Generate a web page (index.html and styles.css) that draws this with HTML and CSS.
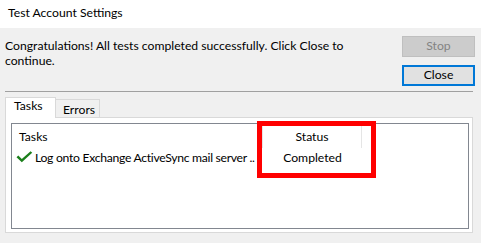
FILE: index.html
```html
<!DOCTYPE html>
<html>
<head>
<meta charset="utf-8">
<link rel="stylesheet" href="styles.css">
</head>
<body>
<div class="window">
  <div class="titlebar">Test Account Settings</div>
  <div class="body">
    <div class="toprow">
      <div class="message">Congratulations! All tests completed successfully. Click Close to continue.</div>
      <div class="buttons">
        <div class="btn btn-disabled">Stop</div>
        <div class="btn btn-default">Close</div>
      </div>
    </div>
    <div class="separator"></div>
    <div class="tabs">
      <div class="tab tab-active">Tasks</div>
      <div class="tab">Errors</div>
    </div>
    <div class="panel">
      <div class="listbox">
        <div class="grid">
          <div class="hcell hcell-task">Tasks</div>
          <div class="hcell hcell-status">Status</div>
          <div class="hcell hcell-rest"></div>
          <div class="cell cell-task">
            <svg class="check" width="17" height="12" viewBox="0 0 17 12"><path d="M0.5 6.2 L2.3 4.6 L5.8 7.9 L14.6 0.3 L16.2 1.8 L5.8 11.2 Z" fill="#1b7f1b"/></svg>
            <span class="task-text">Log onto Exchange ActiveSync mail server ..</span>
          </div>
          <div class="cell cell-status">Completed</div>
          <div class="cell"></div>
        </div>
        <div class="highlight"></div>
      </div>
    </div>
  </div>
</div>
</body>
</html>
```
FILE: styles.css
```css
html, body {
  margin: 0;
  padding: 0;
}
body {
  width: 481px;
  height: 243px;
  overflow: hidden;
  background: #f0f0f0;
  font-family: "Lato", "Noto Sans", "Liberation Sans", sans-serif;
  font-size: 12.2px;
  color: #000;
}
.window {
  display: flex;
  flex-direction: column;
}
.titlebar {
  height: 28px;
  background: #fff;
  line-height: 26px;
  padding-left: 8px;
  box-sizing: border-box;
}
.body {
  padding: 0 8px 0 5px;
  display: flex;
  flex-direction: column;
}
.toprow {
  display: flex;
  justify-content: space-between;
  padding-top: 8px;
}
.message {
  width: 380px;
  line-height: 15px;
  padding-top: 2px;
}
.buttons {
  display: flex;
  flex-direction: column;
  gap: 8px;
  margin-right: -2px;
}
.btn {
  width: 73px;
  height: 21px;
  box-sizing: border-box;
  text-align: center;
  line-height: 18px;
}
.btn-disabled {
  background: #cccccc;
  border: 1px solid #bfbfbf;
  color: #838383;
}
.btn-default {
  background: #e1e1e1;
  border: 2px solid #0078d7;
  line-height: 16px;
}
.separator {
  height: 1px;
  background: #a0a0a0;
  margin-top: 5px;
}
.tabs {
  display: flex;
  align-items: flex-end;
  margin-top: 4px;
  height: 21px;
  position: relative;
  z-index: 1;
}
.tab {
  height: 18px;
  box-sizing: border-box;
  border: 1px solid #d9d9d9;
  border-bottom: none;
  border-left: none;
  background: #f0f0f0;
  width: 44px;
  padding-left: 7px;
  line-height: 19px;
}
.tab-active {
  height: 21px;
  background: #fff;
  border-left: 1px solid #d9d9d9;
  width: 51px;
  padding: 0 0 0 8px;
  line-height: 15px;
  margin-bottom: -1px;
}
.panel {
  height: 116px;
  box-sizing: border-box;
  border: 1px solid #d9d9d9;
  background: #fff;
  padding: 5px 3px 4px 5px;
}
.listbox {
  position: relative;
  height: 106px;
  box-sizing: border-box;
  border: 1px solid #828790;
  background: #fff;
}
.grid {
  display: grid;
  grid-template-columns: 251px 99px 1fr;
  grid-template-rows: 24px 20px;
}
.hcell {
  margin-top: 2px;
  line-height: 22px;
  border-right: 1px solid #e5e5e5;
}
.hcell-task {
  padding-left: 7px;
}
.hcell-status {
  text-align: center;
}
.hcell-rest {
  border-right: none;
}
.cell {
  line-height: 20px;
  white-space: nowrap;
}
.cell-task {
  display: flex;
  align-items: center;
  padding-left: 4px;
  gap: 2px;
}
.check {
  flex-shrink: 0;
  margin-top: -2px;
}
.task-text {
  letter-spacing: -0.3px;
}
.cell-status {
  text-align: center;
}
.highlight {
  position: absolute;
  left: 245px;
  top: -3px;
  width: 119px;
  height: 57px;
  box-sizing: border-box;
  border: 5px solid #ff0000;
}
```
